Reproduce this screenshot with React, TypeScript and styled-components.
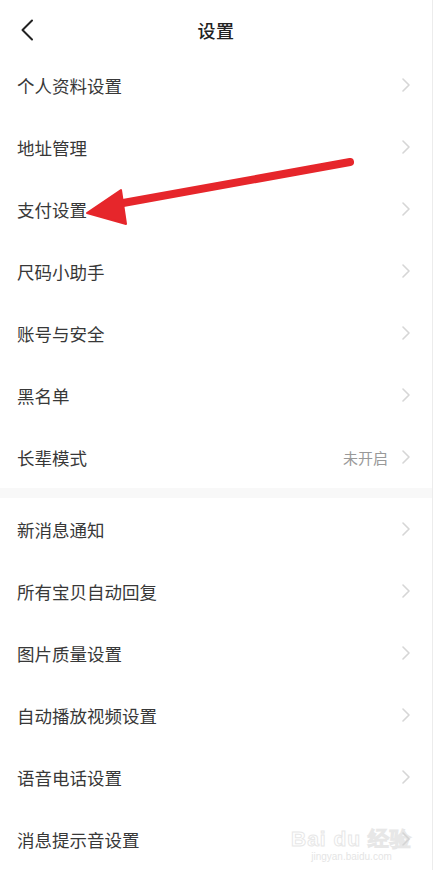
import styled, { createGlobalStyle } from 'styled-components';

const GlobalStyle = createGlobalStyle`
  html, body {
    margin: 0;
    padding: 0;
    background: #fff;
  }
  body {
    font-family: "Noto Sans CJK SC", "Noto Sans", sans-serif;
  }
`;

const Page = styled.div`
  position: relative;
  width: 433px;
  height: 870px;
  overflow: hidden;
  background: #fff;
  border-right: 1px solid #ececec;
  box-sizing: border-box;
`;

const Header = styled.header`
  height: 54px;
  display: flex;
  align-items: center;
  justify-content: center;
  position: relative;
  padding-top: 6px;
  box-sizing: border-box;
`;

const BackButton = styled.button`
  position: absolute;
  left: 14px;
  top: 15px;
  width: 26px;
  height: 30px;
  padding: 0;
  border: none;
  background: none;
  display: flex;
  align-items: center;
  justify-content: center;
`;

const Title = styled.h1`
  margin: 0;
  font-size: 18px;
  font-weight: 500;
  color: #222;
  letter-spacing: 0.5px;
`;

const Group = styled.ul`
  list-style: none;
  margin: 0;
  padding: 0;
`;

const Divider = styled.div`
  height: 10px;
  background: #f8f8f8;
`;

const Row = styled.li`
  height: 62px;
  display: flex;
  align-items: center;
  padding: 0 22px 0 17px;
  box-sizing: border-box;
`;

const Label = styled.span`
  flex: 1;
  font-size: 17.5px;
  color: #383838;
`;

const Value = styled.span`
  font-size: 15px;
  color: #999;
  margin-right: 14px;
`;

const Chevron = () => (
  <svg width="8" height="14" viewBox="0 0 8 14" fill="none">
    <path d="M1 1 L7 7 L1 13" stroke="#d6d6d6" strokeWidth="1.6" strokeLinecap="round" strokeLinejoin="round" />
  </svg>
);

const Arrow = styled.svg`
  position: absolute;
  left: 0;
  top: 0;
  pointer-events: none;
`;

const Watermark = styled.div`
  position: absolute;
  right: 20px;
  bottom: 8px;
  display: flex;
  flex-direction: column;
  align-items: center;
  font-family: "Liberation Sans", sans-serif;
  pointer-events: none;
  opacity: 0.55;
`;

const Mark = styled.span`
  font-size: 21px;
  font-weight: 700;
  letter-spacing: 1px;
  -webkit-text-stroke: 1px #d4d4d4;
  color: #fff;
`;

const MarkUrl = styled.span`
  font-size: 10px;
  color: #cfcfcf;
  margin-top: -2px;
`;

type Item = { label: string; value?: string };

const first: Item[] = [
  { label: '个人资料设置' },
  { label: '地址管理' },
  { label: '支付设置' },
  { label: '尺码小助手' },
  { label: '账号与安全' },
  { label: '黑名单' },
  { label: '长辈模式', value: '未开启' },
];

const second: Item[] = [
  { label: '新消息通知' },
  { label: '所有宝贝自动回复' },
  { label: '图片质量设置' },
  { label: '自动播放视频设置' },
  { label: '语音电话设置' },
  { label: '消息提示音设置' },
];

function SettingsGroup({ items }: { items: Item[] }) {
  return (
    <Group>
      {items.map((item) => (
        <Row key={item.label}>
          <Label>{item.label}</Label>
          {item.value && <Value>{item.value}</Value>}
          <Chevron />
        </Row>
      ))}
    </Group>
  );
}

export default function App() {
  return (
    <>
      <GlobalStyle />
      <Page>
        <Header>
          <BackButton aria-label="back">
            <svg width="14" height="22" viewBox="0 0 14 22" fill="none">
              <path d="M12 1.5 L2.5 11 L12 20.5" stroke="#222" strokeWidth="2" strokeLinecap="round" strokeLinejoin="round" />
            </svg>
          </BackButton>
          <Title>设置</Title>
        </Header>
        <SettingsGroup items={first} />
        <Divider />
        <SettingsGroup items={second} />

        <Watermark>
          <Mark>Bai du 经验</Mark>
          <MarkUrl>jingyan.baidu.com</MarkUrl>
        </Watermark>

        <Arrow width="433" height="870" viewBox="0 0 433 870">
          <line x1="350" y1="162" x2="112" y2="205" stroke="#e6262b" strokeWidth="8" strokeLinecap="round" />
          <polygon points="87,213 121,190 126,224" fill="#e6262b" stroke="#e6262b" strokeWidth="2" strokeLinejoin="round" />
        </Arrow>
      </Page>
    </>
  );
}
